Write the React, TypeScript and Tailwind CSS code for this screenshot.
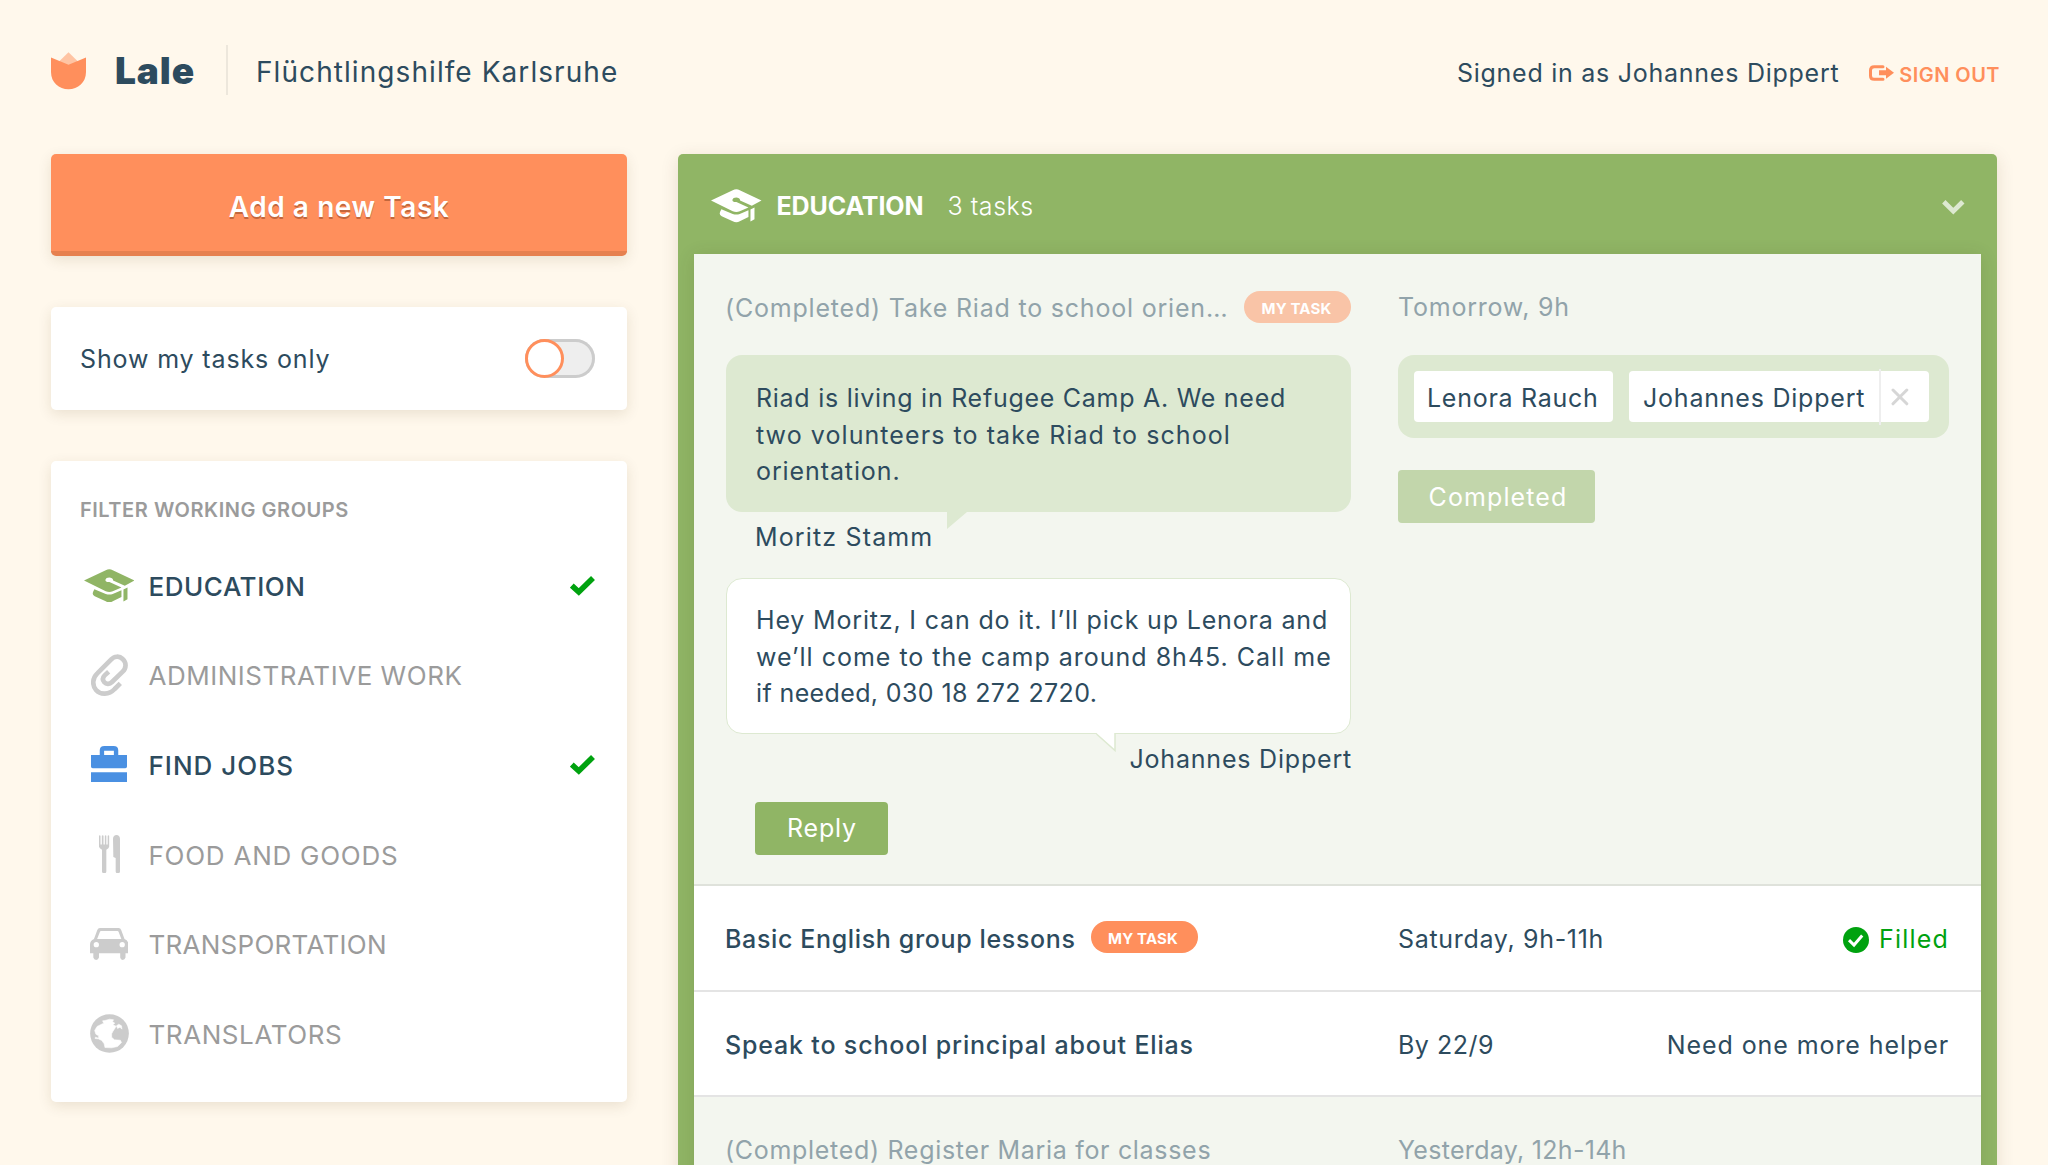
import React from 'react';

type IconProps = { className?: string };

const Logo = () => (
  <svg width="35" height="38" viewBox="0 0 35 38" className="mt-px shrink-0">
    <path d="M17.5 0.3 L27 9.5 L17.5 14 L8 9.5 Z" fill="#ffc4a3" />
    <path d="M0 5.5 L17.5 12.7 L35 5.5 V20 C35 30.5 27 37.3 17.5 37.3 C8 37.3 0 30.5 0 20 Z" fill="#ff8f5c" />
  </svg>
);

const Cap = ({ className }: IconProps) => (
  <svg width="50.5" height="33.5" viewBox="5 23.5 151 100" fill="currentColor" className={className}>
    <path d="M5 58 L70 27 Q81 21 91 27 L156 58 L127 73.5 L92 58 C93 46 70 46 69 56 C69 61 75 63.500 81 62 L117 78.500 L91 90 Q81 94 70 90 Z" />
    <path d="M36 84 L70 98 Q81 102 91 98 L117 87 V107 L91 120 Q81 126 70 120 L37 105 Q31 102 31 97 Q31 93 36 84 Z" />
    <path d="M123 85 L135 79 V114 L123 120.500 Z" />
  </svg>
);

const Clip = ({ className }: IconProps) => (
  <svg width="37" height="42" viewBox="27 276 111 126" fill="none" stroke="currentColor" strokeWidth="14" className={className}>
    <path d="M115 364 L98 381 C81 399 55 399 42 384 C30 370 31 348 46 334 L87 293 C97 282 112 281 122 291 C134 302 133 318 122 329 L90 360 C83 367 73 368 67 361 C61 354 62 346 68 340 L80 329" />
  </svg>
);

const Briefcase = ({ className }: IconProps) => (
  <svg width="36" height="36" viewBox="27 555 107 107" fill="currentColor" className={className}>
    <path fillRule="evenodd" d="M27 582 H53 V568 Q53 555 67 555 H94 Q108 555 108 568 V582 H134 V616 Q134 621 129 621 H32 Q27 621 27 616 Z M66 582 H95 V569 H66 Z" />
    <path d="M27 633 H134 V662 H27 Z" />
  </svg>
);

const Cutlery = ({ className }: IconProps) => (
  <svg width="21" height="38.500" viewBox="51 821 63 115" fill="currentColor" className={className}>
    <path d="M51 823 Q53 820 55.500 823 V849 H59.500 V823 Q62 820 64.500 823 V849 H68.500 V823 Q71 820 73 823 V849 H77 V823 Q79.500 820 81.500 823 V856 Q81 861 73 865 V930 Q72 936 66.500 936 Q61 936 60 930 V865 Q52 861 51 856 Z" />
    <path d="M93 832 Q94 821 103.500 821 Q113 821 114 832 V930 Q113 936 107.500 936 Q102 936 101 930 V890 L94 887 Z" />
  </svg>
);

const Car = ({ className }: IconProps) => (
  <svg width="38.500" height="32" viewBox="22 1098 116 96" fill="currentColor" className={className}>
    <path
      fillRule="evenodd"
      d="M52 1098 H108 Q114 1098 116 1104 L126 1131 Q138 1136 138 1148 V1174 H129 V1187 Q127 1194 120.500 1194 Q114 1194 113 1187 V1174 H49 V1187 Q47 1194 40.500 1194 Q34 1194 32 1187 V1174 H22 V1148 Q22 1136 34 1131 L44 1104 Q46 1098 52 1098 Z M55 1106.500 Q53 1106.500 52 1109 L43.500 1131 H116.500 L108 1109 Q107 1106.500 105 1106.500 Z M33 1148 a8 8 0 1 0 16 0 a8 8 0 1 0 -16 0 Z M111 1148 a8 8 0 1 0 16 0 a8 8 0 1 0 -16 0 Z"
    />
  </svg>
);

const Globe = ({ className }: IconProps) => (
  <svg width="39" height="39" viewBox="22.500 1356.500 117 117" className={className}>
    <circle cx="81" cy="1415" r="58" fill="currentColor" />
    <g transform="matrix(1.186 0 0 1 -126 774)" fill="#ffffff" stroke="#ffffff" strokeWidth="1.500" strokeLinejoin="round">
      <path d="M157 603 L163 602 L175 598 L185 600 L182 605 L188 610 L183 615 L191 619 L188 626 L183 635 L180 642 L180 652 L187 660 L202 661 L205 668 L195 680 L180 684 L163 683 L161 672 L155 662 L146 657 L138 656 L139 652 L147 655 L147 648 L140 643 L137 632 L143 620 L153 614 L160 610 Z" />
      <path d="M192 618 L198 613 L205 618 L206 628 L201 622 L195 626 Z" />
    </g>
  </svg>
);

const Check = ({ className }: IconProps) => (
  <svg width="25" height="20" viewBox="0 0 25 20" fill="none" stroke="#00a20f" strokeWidth="5.600" className={className}>
    <path d="M1.800 9.500 L8.800 16 L23 2" />
  </svg>
);

const SignOut = ({ className }: IconProps) => (
  <svg width="25" height="16" viewBox="0 0 75 48" className={className}>
    <path d="M42 5 H16 Q4.500 5 4.500 16 V32 Q4.500 43 16 43 H42" fill="none" stroke="currentColor" strokeWidth="9" strokeLinecap="round" />
    <path d="M30 16 H51 V5.500 L75 23.500 L51 41.500 V31 H30 Z" fill="currentColor" />
  </svg>
);

const groups = [
  { name: 'EDUCATION', Icon: Cap, tone: 'text-[#90b565]', track: 'tracking-[0.55px]', on: true },
  { name: 'ADMINISTRATIVE WORK', Icon: Clip, tone: 'text-[#cccccc]', track: 'tracking-[0.52px]', on: false },
  { name: 'FIND JOBS', Icon: Briefcase, tone: 'text-[#4a90e2]', track: 'tracking-[1px]', on: true },
  { name: 'FOOD AND GOODS', Icon: Cutlery, tone: 'text-[#cccccc]', track: 'tracking-[0.75px]', on: false },
  { name: 'TRANSPORTATION', Icon: Car, tone: 'text-[#cccccc]', track: 'tracking-[0.27px]', on: false },
  { name: 'TRANSLATORS', Icon: Globe, tone: 'text-[#cccccc]', track: 'tracking-[0.58px]', on: false },
];

const Badge = ({ className = '' }: IconProps) => (
  <span
    className={`flex h-8 w-[107px] shrink-0 items-center justify-center rounded-full pt-[3px] pr-[2px] text-[15px] leading-none font-bold tracking-[0.17px] text-white ${className}`}
  >
    MY TASK
  </span>
);

const cardShadow = 'shadow-[0_4px_14px_rgba(80,60,10,0.12)]';

function Header() {
  return (
    <header className="flex h-[154px] items-start pt-[45px] pr-[49px] pl-[51px]">
      <div className="flex h-[50px] items-center">
        <Logo />
        <h1 className="mt-px ml-[29px] w-[111px] text-[37px] leading-[50px] font-black tracking-[0.9px]">Lale</h1>
        <div className="h-[50px] w-[1.5px] bg-[#ede7dc]" />
        <p className="mt-[4px] ml-[28.500px] text-[28px] leading-[50px] tracking-[1.07px]">Flüchtlingshilfe Karlsruhe</p>
      </div>
      <div className="mt-[3px] ml-auto flex h-[50px] items-center">
        <p className="text-[25px] leading-[50px] tracking-[0.74px]">Signed in as Johannes Dippert</p>
        <a className="-mr-px ml-[30px] flex items-center text-[20px] leading-[50px] font-semibold tracking-[0.45px] text-[#ff8f5c]">
          <SignOut className="mr-[5px]" />
          <span className="mt-[3px]">SIGN OUT</span>
        </a>
      </div>
    </header>
  );
}

function Sidebar() {
  return (
    <aside className="flex w-[576px] shrink-0 flex-col gap-[51px]">
      <button
        className={`h-[102px] rounded-[5px] border-b-[5px] border-[#e6804f] bg-[#ff8f5c] pt-2 text-[28px] font-semibold tracking-[0.57px] text-white [text-shadow:0_2px_0_#c2673c] ${cardShadow}`}
      >
        Add a new Task
      </button>
      <div className={`flex h-[103px] items-center justify-between rounded-[5px] bg-white pr-8 pl-[29px] ${cardShadow}`}>
        <span className="mt-[2px] text-[25px] tracking-[0.86px]">Show my tasks only</span>
        <span className="flex h-[39px] w-[70px] rounded-full bg-[#eeeeee] ring-3 ring-[#cccccc] ring-inset">
          <span className="h-[39px] w-[39px] rounded-full border-3 border-[#ff8f5c] bg-white" />
        </span>
      </div>
      <div className={`h-[641px] rounded-[5px] bg-white pt-[37px] pr-8 pl-[29px] ${cardShadow}`}>
        <h2 className="mb-[19px] text-[20px] leading-6 font-semibold tracking-[0.54px] text-[#9b9b9b]">FILTER WORKING GROUPS</h2>
        <ul>
          {groups.map(({ name, Icon, tone, track, on }) => (
            <li key={name} className="flex h-[89.600px] items-center">
              <span className={`flex w-[58px] justify-center ${tone}`}>
                <Icon className="-mt-px shrink-0" />
              </span>
              <span className={`mt-px ml-[10.500px] text-[26px] ${track} ${on ? 'font-medium' : 'text-[#9b9b9b]'}`}>{name}</span>
              {on && <Check className="ml-auto" />}
            </li>
          ))}
        </ul>
      </div>
    </aside>
  );
}

function OpenTask() {
  return (
    <article className="flex h-[632px] gap-[47px] border-b-2 border-[#dfe2db] bg-[#f3f6ef] pt-[37px] pr-8 pl-8 text-[25px]">
      <div className="w-[625px] shrink-0">
        <div className="flex h-8 items-center justify-between">
          <span className="mt-px -ml-px leading-8 tracking-[0.8px] whitespace-nowrap text-[#91a3aa]">
            (Completed) Take Riad to school orien…
          </span>
          <Badge className="bg-[#f9c4a7]" />
        </div>
        <div className="relative mt-8 h-[157px] rounded-2xl bg-[#dde9d1] pt-[25px] pl-[30px] leading-[36.500px] whitespace-nowrap">
          <p className="tracking-[0.73px]">Riad is living in Refugee Camp A. We need</p>
          <p className="tracking-[1.07px]">two volunteers to take Riad to school</p>
          <p className="tracking-[0.9px]">orientation.</p>
          <svg width="20" height="18" viewBox="0 0 20 18" className="absolute top-[156px] left-[221px]">
            <path d="M0 0 H20 V1 L0 18 Z" fill="#dde9d1" />
          </svg>
        </div>
        <p className="mt-[9px] pl-[29px] leading-8 tracking-[1.15px]">Moritz Stamm</p>
        <div className="relative mt-[25px] h-[156px] rounded-2xl border-[1.500px] border-[#dde9d1] bg-white pt-[23px] pl-[29px] leading-[36.500px] whitespace-nowrap">
          <p className="tracking-[0.83px]">Hey Moritz, I can do it. I’ll pick up Lenora and</p>
          <p className="tracking-[1px]">we’ll come to the camp around 8h45. Call me</p>
          <p className="tracking-[0.38px]">if needed, 030 18 272 2720.</p>
          <svg width="21" height="20" viewBox="0 0 21 20" className="absolute top-[153px] left-[369px]">
            <path d="M0.500 0 H19 V18 L1 2 Z" fill="#ffffff" />
            <path d="M0.500 2 L19 18.500 V1" fill="none" stroke="#dde9d1" strokeWidth="1.500" />
          </svg>
        </div>
        <p className="mt-[9px] -mr-px text-right leading-8 tracking-[0.8px]">Johannes Dippert</p>
        <button className="mt-[27px] ml-[29px] block h-[53px] w-[133px] rounded-[4px] bg-[#90b565] pl-px tracking-[0.8px] text-white">
          Reply
        </button>
      </div>
      <div className="w-[551px]">
        <p className="leading-8 tracking-[0.78px] text-[#91a3aa]">Tomorrow, 9h</p>
        <div className="mt-8 flex h-[83px] items-center gap-4 rounded-2xl bg-[#dde9d1] px-4 leading-none whitespace-nowrap">
          <span className="flex h-[51px] w-[199px] items-center rounded-[4px] bg-white pt-[4px] pl-[13px] tracking-[0.73px]">
            Lenora Rauch
          </span>
          <span className="relative flex h-[51px] w-[300px] items-center rounded-[4px] bg-white pl-[14px]">
            <span className="pt-[4px] tracking-[0.78px]">Johannes Dippert</span>
            <span className="absolute top-[-2px] left-[250px] h-[56px] w-[2px] bg-[#eeeeee]" />
            <svg width="18" height="18" viewBox="0 0 18 18" className="ml-auto mr-[20px]">
              <path d="M2 2 L15.800 15.800 M15.800 2 L2 15.800" stroke="#d6d6d6" strokeWidth="3" strokeLinecap="round" />
            </svg>
          </span>
        </div>
        <button className="mt-8 block h-[53px] w-[197px] rounded-[4px] bg-[#c2d6ab] pt-[2px] pl-[3px] tracking-[1.1px] text-white">
          Completed
        </button>
      </div>
    </article>
  );
}

type RowProps = {
  title: string;
  titleTrack: string;
  when: string;
  whenTrack: string;
  done?: boolean;
  mine?: boolean;
  children?: React.ReactNode;
};

function TaskRow({ title, titleTrack, when, whenTrack, done, mine, children }: RowProps) {
  return (
    <article
      className={`flex h-[105.600px] items-center gap-[47px] border-b-2 border-[#e4e4e4] pt-[4px] pr-8 pl-8 text-[25px] whitespace-nowrap ${done ? 'bg-[#f3f6ef] text-[#91a3aa]' : 'bg-white'}`}
    >
      <div className="flex w-[625px] shrink-0 items-center">
        <span className={`-ml-px ${titleTrack} ${done ? '' : 'font-medium'}`}>{title}</span>
        {mine && <Badge className="mb-[5px] ml-[15px] bg-[#ff8f5c]" />}
      </div>
      <div className="flex w-[551px] items-center justify-between">
        <span className={whenTrack}>{when}</span>
        {children}
      </div>
    </article>
  );
}

function Panel() {
  return (
    <main className="h-[1100px] w-[1319px] rounded-[5px] bg-[#90b565] px-4 shadow-[0_4px_18px_rgba(80,50,10,0.13)]">
      <div className="flex h-[100px] items-center pt-1 pr-4 pl-[17px] text-[25px] text-white">
        <Cap />
        <h2 className="mt-[2px] ml-[15px] font-bold tracking-[-0.1px]">EDUCATION</h2>
        <span className="mt-[2px] ml-[24px] font-light tracking-[0.55px]">3 tasks</span>
        <svg width="23" height="15" viewBox="0 0 23 15" className="mt-[3px] ml-auto" fill="none" stroke="#dde9d1" strokeWidth="4.800">
          <path d="M1.800 1.800 L11.300 11.200 L20.800 1.800" />
        </svg>
      </div>
      <div className="h-[1000px] rounded-[2px] shadow-[0_2px_18px_rgba(60,60,20,0.14)]">
        <OpenTask />
        <TaskRow title="Basic English group lessons" titleTrack="tracking-[0.64px]" when="Saturday, 9h-11h" whenTrack="tracking-[0.68px]" mine>
          <span className="flex items-center tracking-[1.2px] text-[#00a20f]">
            <svg width="26" height="26" viewBox="0 0 26 26" className="mr-[10px]">
              <circle cx="13" cy="13" r="13" fill="#00a20f" />
              <path d="M6 13.200 L11 18 L19.200 8.600" fill="none" stroke="#ffffff" strokeWidth="3" />
            </svg>
            Filled
          </span>
        </TaskRow>
        <TaskRow title="Speak to school principal about Elias" titleTrack="tracking-[0.83px]" when="By 22/9" whenTrack="tracking-[0.5px]">
          <span className="tracking-[0.92px]">Need one more helper</span>
        </TaskRow>
        <TaskRow title="(Completed) Register Maria for classes" titleTrack="tracking-[0.69px]" when="Yesterday, 12h-14h" whenTrack="tracking-[0.3px]" done />
      </div>
    </main>
  );
}

export default function App() {
  return (
    <div className="h-[1165px] w-[2048px] overflow-hidden bg-[#fff8ec] font-['Inter',sans-serif] text-[#2d4b5e]">
      <Header />
      <div className="flex gap-[51px] pl-[51px]">
        <Sidebar />
        <Panel />
      </div>
    </div>
  );
}
